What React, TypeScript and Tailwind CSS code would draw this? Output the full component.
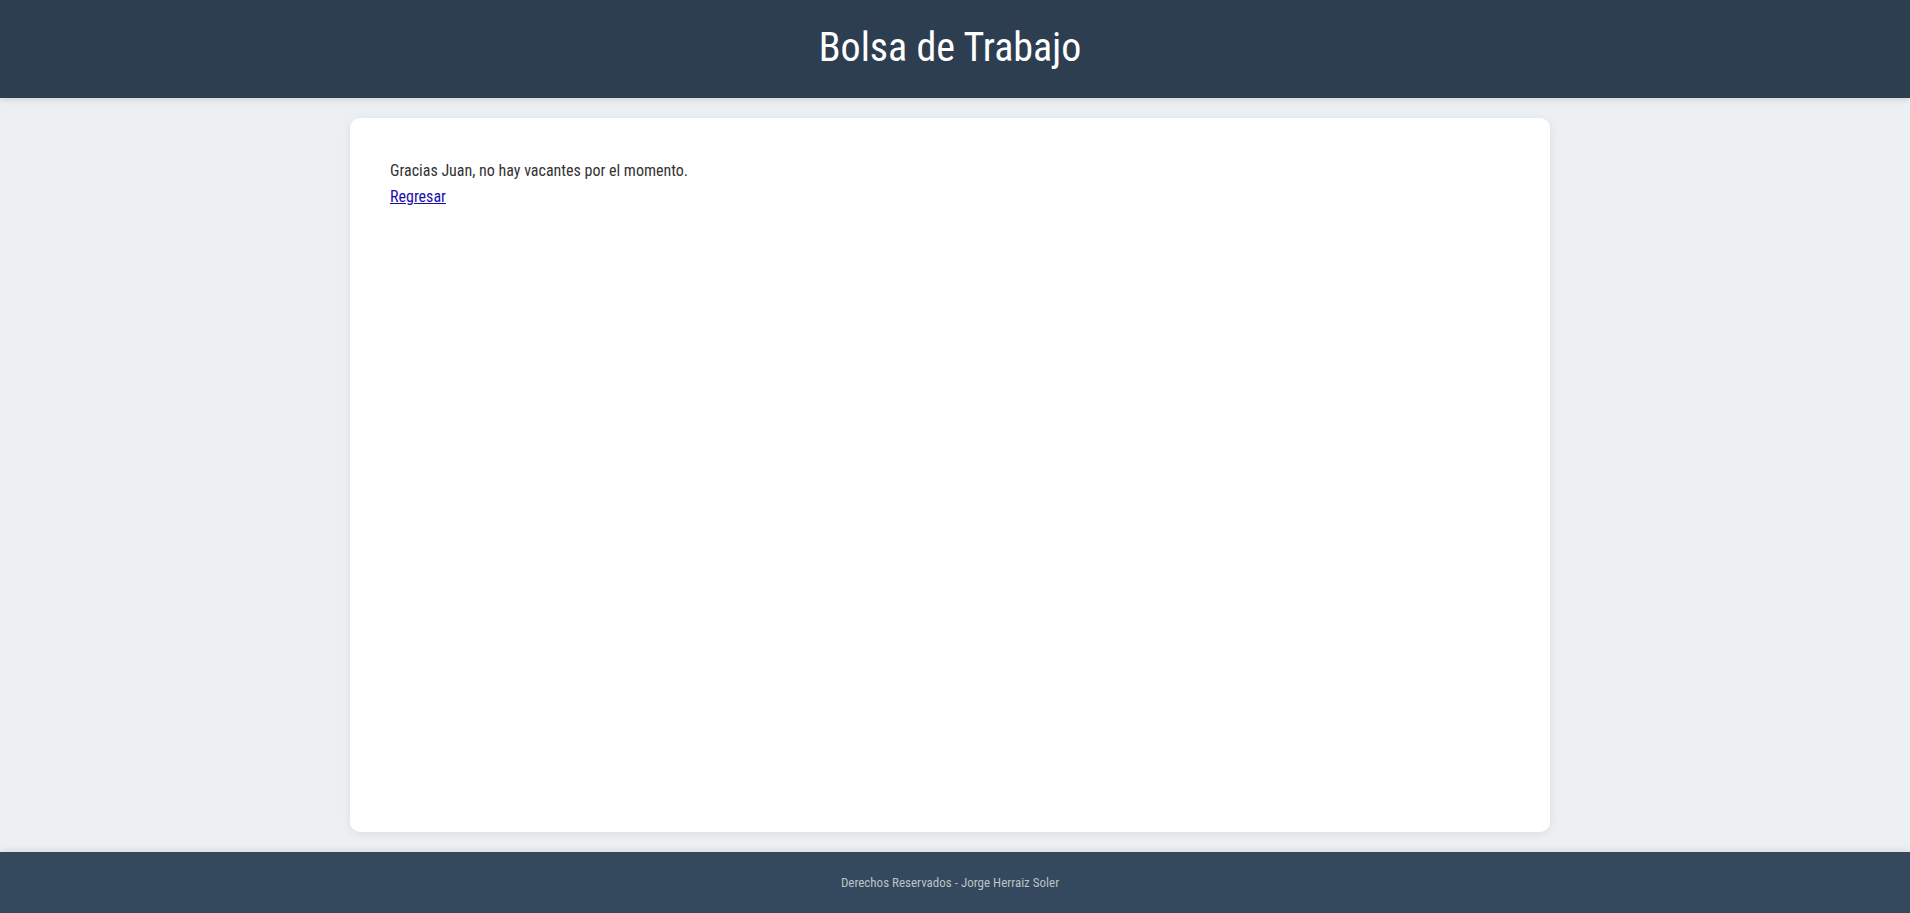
export default function App() {
  return (
    <div
      className="min-h-screen flex flex-col bg-[#edf0f3] text-[#333]"
      style={{ fontFamily: '"Roboto Condensed", Roboto, "Liberation Sans", sans-serif' }}
    >
      <header className="h-[98px] bg-[#2c3e50] flex items-center justify-center pr-[10px] shadow-[0_2px_6px_rgba(0,0,0,0.12)]">
        <h1 className="text-[40px] leading-none text-white font-normal -mt-[3px]">Bolsa de Trabajo</h1>
      </header>

      <main className="flex-1 flex justify-center pr-[10px] py-5">
        <div className="w-[1200px] bg-white rounded-[10px] shadow-[0_2px_10px_rgba(0,0,0,0.08)] p-10">
          <p className="text-base leading-[26px]">Gracias Juan, no hay vacantes por el momento.</p>
          <a href="#" className="text-base leading-[26px] text-[#1a0dab] underline">
            Regresar
          </a>
        </div>
      </main>

      <footer className="h-[61px] bg-[#34495e] flex items-center justify-center pr-[10px] shadow-[0_-2px_6px_rgba(0,0,0,0.08)]">
        <p className="text-[13px] text-[#bdc3c7]">Derechos Reservados - Jorge Herraiz Soler</p>
      </footer>
    </div>
  );
}
